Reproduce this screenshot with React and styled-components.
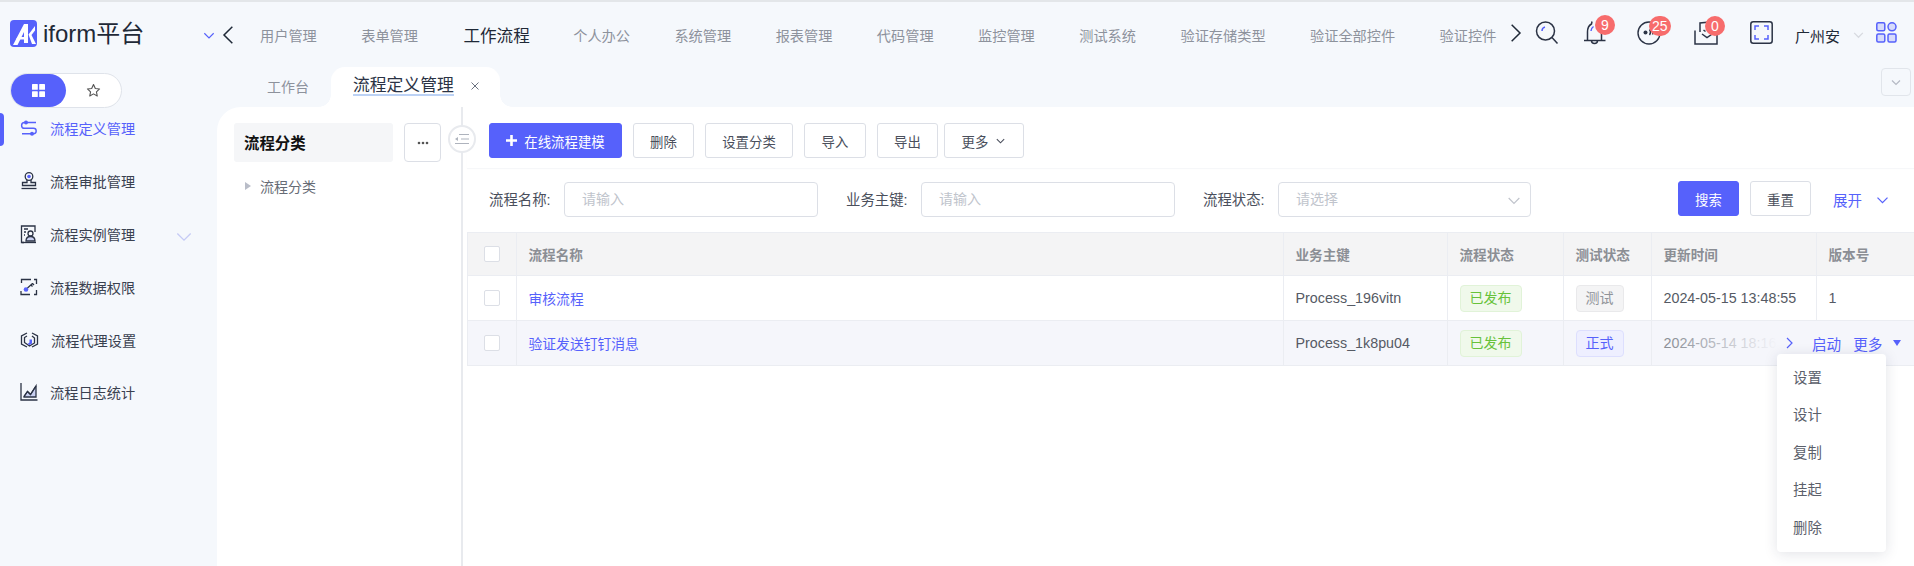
import React from "react";
import styled, { createGlobalStyle } from "styled-components";

const BLUE = "#5661fb";
const INK = "#2b3345";
const FONT = `"Liberation Sans", "Noto Sans CJK SC", sans-serif`;

const Global = createGlobalStyle`
  html, body { margin: 0; padding: 0; background: #f5f8fc; }
  * { box-sizing: border-box; }
  body { font-family: ${FONT}; font-size: 14px; color: #4a4f5c; overflow: hidden; }
`;

const Page = styled.div`
  width: 1914px; height: 566px; overflow: hidden; background: #f5f8fc;
  border-top: 2px solid #e3e6e9; display: flex; flex-direction: column;
`;
const Header = styled.header`
  height: 65px; flex: none; display: flex; align-items: center; padding-left: 10px;
`;
const Logo = styled.div`
  width: 192px; flex: none; display: flex; align-items: center; gap: 6px;
  font-size: 24px; color: #1f2937; line-height: 1; margin-top: -2px;
`;
const SmallChevron = styled.span`
  display: inline-flex; flex: none; color: ${p => p.$color || BLUE};
  margin: ${p => p.$margin || "0"};
`;
const NavArrow = styled.span`
  display: inline-flex; flex: none; margin: ${p => p.$margin || "0"}; color: #1f2937;
`;
const Nav = styled.nav`
  display: flex; align-items: center; gap: 44.45px; width: 1245px; flex: none; overflow: hidden;
`;
const NavItem = styled.span`
  flex: none; white-space: nowrap; font-size: ${p => (p.$active ? "16.6px" : "14.2px")};
  color: ${p => (p.$active ? "#1f2937" : "#8d929c")};
  ${p => (p.$active ? "margin: 0 -1px 0 1px;" : "")}
`;
const HeaderTools = styled.div`
  display: flex; align-items: center; flex: none; margin-top: -4px;
`;
const ToolBox = styled.span`
  position: relative; display: inline-flex; flex: none; margin: 0 ${p => p.$gap}px 0 ${p => p.$before || 0}px;
`;
const Badge = styled.span`
  position: absolute; top: -5px; left: ${p => p.$left}px; height: 20px; min-width: 20px;
  padding: 0 3px; border-radius: 10px; background: #f76c6c; color: #fff; font-size: 14px;
  line-height: 20px; text-align: center;
`;
const UserName = styled.span`
  font-size: 15px; color: #1f2937; margin: 6px 12px 0 0;
`;

const Body = styled.div`
  flex: 1; display: flex; min-height: 0;
`;
const Sidebar = styled.aside`
  width: 217px; flex: none; display: flex; flex-direction: column; padding-top: 6px;
`;
const ModeSwitch = styled.div`
  width: 112px; height: 35px; margin-left: 10px; border: 1px solid #dfe3ea; border-radius: 18px;
  background: #fff; display: flex;
`;
const ModeButton = styled.span`
  width: 55px; height: 33px; border-radius: 17px;
  display: flex; align-items: center; justify-content: center;
  background: ${p => (p.$active ? BLUE : "transparent")};
`;
const Menu = styled.ul`
  list-style: none; margin: 4px 0 0; padding: 0;
`;
const MenuItem = styled.li`
  position: relative; height: 52.8px; display: flex; align-items: center; padding: 0 0 0 20px;
  gap: 12px; font-size: 14.2px; color: ${p => (p.$active ? BLUE : "#3a4150")};
  margin-top: ${p => (p.$first ? "-10px" : "0")};
`;
const ActiveBar = styled.span`
  position: absolute; left: 0; top: 11px; width: 4px; height: 33px; background: ${BLUE};
  border-radius: 0 4px 4px 0;
`;
const MenuChevron = styled.span`
  display: inline-flex; margin-left: 27px; color: #c6cbf5; padding-top: 4px;
`;

const Right = styled.div`
  flex: 1; min-width: 0; display: flex; flex-direction: column;
`;
const TabBar = styled.div`
  height: 40px; flex: none; display: flex; align-items: stretch; position: relative;
`;
const PlainTab = styled.span`
  width: 114px; flex: none; display: flex; align-items: center; justify-content: flex-end;
  padding: 0 22px 3px 0; font-size: 14px; color: #8d929c;
`;
const ActiveTab = styled.div`
  width: 169px; flex: none; background: #fff; border-radius: 14px 14px 0 0; display: flex;
  align-items: center; padding: 0 0 3px 22px; position: relative;
  &::before, &::after {
    content: ""; position: absolute; bottom: 0; width: 12px; height: 12px;
  }
  &::before { left: -12px; background: radial-gradient(circle at 0 0, #f5f8fc 11.5px, #fff 12px); }
  &::after { right: -12px; background: radial-gradient(circle at 100% 0, #f5f8fc 11.5px, #fff 12px); }
`;
const ActiveLabel = styled.span`
  font-size: 16.8px; color: #2b3345; line-height: 20px;
  background: linear-gradient(#bcd2f5, #bcd2f5) left bottom / 100% 2px no-repeat;
`;
const CloseMark = styled.span`
  display: inline-flex; margin-left: 17px; color: #6b7280;
`;
const TabCollapse = styled.span`
  position: absolute; right: 3px; top: 1px; width: 30px; height: 28px; border: 1px solid #e1e5eb;
  border-radius: 4px; display: flex; align-items: center; justify-content: center; color: #b5b9c4;
`;

const Workspace = styled.main`
  flex: 1; min-height: 0; background: #fff; border-top-left-radius: 24px; display: flex;
`;
const TreePanel = styled.section`
  width: 246px; flex: none; border-right: 2px solid #e8eaee; padding: 16px 20px 0 17px; position: relative;
`;
const TreeHead = styled.div`
  display: flex; gap: 11px; height: 39px;
`;
const TreeTitle = styled.div`
  width: 159px; flex: none; background: #f5f6f8; border-radius: 3px; display: flex; align-items: center;
  padding: 0 0 2px 10px; font-size: 15.4px; font-weight: 700; color: #111;
`;
const DotsButton = styled.span`
  width: 37px; flex: none; border: 1px solid #dcdfe6; border-radius: 4px; display: flex; align-items: center;
  justify-content: center; color: #555;
`;
const CollapseCircle = styled.span`
  position: absolute; right: -15px; top: 18px; width: 28px; height: 28px; border-radius: 50%;
  background: #fff; border: 2px solid #e8eaee; display: flex; align-items: center; justify-content: center;
  z-index: 2;
`;
const TreeNode = styled.div`
  display: flex; align-items: center; gap: 9px; padding: 14px 0 0 11px; font-size: 14px; color: #666b75;
`;
const TreeCaret = styled.span`
  width: 0; height: 0; border-left: 6px solid #b9bdc8; border-top: 4.5px solid transparent; border-bottom: 4.5px solid transparent;
`;

const ListPanel = styled.section`
  flex: 1; min-width: 0; padding: 16px 0 0 4px; position: relative;
`;
const Toolbar = styled.div`
  height: 45px; display: flex; align-items: flex-start; padding-left: 22px; gap: 11px;
  box-shadow: 0 1px 1px #f6f7f9;
`;
const Btn = styled.button`
  height: 35px; width: ${p => p.$w}px; flex: none; border-radius: 3px; font-family: ${FONT};
  font-size: 13.4px; padding: 0; cursor: pointer;
  background: ${p => (p.$primary ? BLUE : "#fff")}; color: ${p => (p.$primary ? "#fff" : "#4a4f5c")};
  border: 1px solid ${p => (p.$primary ? BLUE : "#dcdfe6")};
  display: inline-flex; align-items: center; justify-content: center; gap: ${p => p.$gap || 0}px;
  margin: 0 0 ${p => p.$mb || 0}px ${p => p.$ml || 0}px;
`;
const SearchRow = styled.div`
  height: 35px; margin-top: 14px; display: flex; align-items: center; padding-left: 22px;
`;
const FieldLabel = styled.label`
  flex: none; width: ${p => p.$w}px; font-size: 14.4px; color: #4a4f5c; margin-left: ${p => p.$ml || 0}px;
  padding-bottom: 3px; white-space: nowrap;
`;
const Input = styled.div`
  width: ${p => p.$w}px; flex: none; height: 35px; border: 1px solid #dcdfe6; border-radius: 4px;
  display: flex; align-items: center; justify-content: space-between; padding: 0 ${p => p.$pr || 16}px 3px 17px;
  font-size: 14px; color: #c0c4cc;
`;
const LinkToggle = styled.span`
  display: inline-flex; align-items: center; gap: 13px; margin-left: 22px; color: ${BLUE}; font-size: 14.5px;
`;

const Table = styled.table`
  width: 1447px; margin-top: 15px; border-collapse: separate; border-spacing: 0; table-layout: fixed;
  font-size: 14.3px; color: #555a64;
`;
const Th = styled.th`
  height: 44px; background: #f4f4f5; border: 1px solid #ebedf2; border-width: 1px 1px 1px 0;
  padding: 0 11.5px; text-align: left; font-weight: 700; color: #8b8e94; font-size: 13.6px;
  &:first-child { border-left: 1px solid #ebedf2; }
  &:last-child { border-right: 0; }
`;
const Td = styled.td`
  height: 45px; padding: 0 11.5px; border: 1px solid #ebedf2; border-width: 0 1px 1px 0;
  background: ${p => (p.$stripe ? "#f5f6fb" : "#fff")}; white-space: nowrap; overflow: visible;
  &:first-child { border-left: 1px solid #ebedf2; }
  &:last-child { border-right: 0; }
`;
const CheckCell = styled.span`
  display: block; width: 16px; height: 16px; margin-left: 4px; border: 1px solid #dcdfe6; border-radius: 2px; background: #fff;
`;
const LinkText = styled.a`
  color: ${BLUE}; font-size: 13.8px;
`;
const Tag = styled.span`
  display: inline-flex; height: 27px; align-items: center; padding: 0 9px 2px; border-radius: 4px; font-size: 14px;
  color: ${p => p.$color}; background: ${p => p.$bg}; border: 1px solid ${p => p.$border};
`;
const FadeCell = styled(Td)`
  position: relative;
`;
const DateFade = styled.span`
  color: #8b8f97;
`;
const RowActions = styled.div`
  position: absolute; top: 0; bottom: 0; right: -97px; width: 245px; display: flex; align-items: center;
  padding-left: 115px; z-index: 1;
  background: linear-gradient(90deg, rgba(245,246,251,0) 0, #f5f6fb 45%);
  color: ${BLUE}; font-size: 14.6px;
`;
const ActionText = styled.span`
  margin-left: ${p => p.$ml}px;
`;
const DownTri = styled.span`
  width: 0; height: 0; margin-left: 11px; border-top: 6px solid ${BLUE}; border-left: 4.5px solid transparent; border-right: 4.5px solid transparent;
`;
const Dropdown = styled.ul`
  position: absolute; top: 247px; right: 28px; width: 109px; height: 198px; margin: 0; padding: 6px 0 0 16px;
  list-style: none; background: #fff; border-radius: 4px; box-shadow: 0 2px 14px rgba(30,40,70,.13); z-index: 5;
`;
const DropItem = styled.li`
  height: 37.4px; line-height: 37.4px; font-size: 14.4px; color: #5b606b;
`;

const Chev = ({ s = 12, d = "down", w = 1.2 }) => {
  const p = { down: "M2 4.5l4 4 4-4", left: "M8 1L3 6l5 5", right: "M4 1l5 5-5 5" }[d];
  return <svg width={s} height={s} viewBox="0 0 12 12" fill="none" stroke="currentColor" strokeWidth={w}><path d={p} /></svg>;
};

const LogoMark = () => (
  <svg width="27" height="27" viewBox="0 0 27 27">
    <rect width="27" height="27" rx="4" fill={BLUE} />
    <path d="M3 25L14 4h4v19h-4V12L7.5 25z" fill="#fff" />
    <path d="M6 19.500h8v-2.500H7.500z" fill="#fff" />
    <path d="M18.500 14.500L25 6v4.500L21.500 15l4.500 9h-4z" fill="#fff" />
  </svg>
);

const SearchIcon = () => (
  <svg width="24" height="24" viewBox="0 0 24 24" fill="none" strokeWidth="1.5">
    <circle cx="10.5" cy="10" r="9" stroke={INK} />
    <path d="M17 16.500l5.500 6" stroke={INK} />
    <path d="M7 10c0-2 1-3.500 3-4" stroke={BLUE} />
  </svg>
);
const BellIcon = () => (
  <svg width="24" height="26" viewBox="0 0 24 26" fill="none" strokeWidth="1.5">
    <path d="M1 20.500h21.500" stroke={INK} />
    <path d="M4.500 20.500V12c0-4 2-7 4-8l.5-2.500M18.500 20.500V12" stroke={INK} />
    <path d="M8.500 20.500c0 2 1.200 3 3 3s3-1 3-3" stroke={INK} />
    <path d="M8 11c0-2 1-3.500 2.500-4.500" stroke={BLUE} />
  </svg>
);
const DiscIcon = () => (
  <svg width="24" height="24" viewBox="0 0 24 24" fill="none" strokeWidth="1.4">
    <circle cx="12" cy="12" r="11" stroke={INK} />
    <circle cx="8.5" cy="11.5" r="2" fill={INK} />
    <path d="M12.500 8.500c1.200 1.500 1.200 4 0 5.500M15.500 13.500c.5-1 .5-2.500.2-3.500" stroke={INK} />
  </svg>
);
const MailIcon = () => (
  <svg width="24" height="24" viewBox="0 0 24 24" fill="none" strokeWidth="1.5">
    <path d="M6 11V2l10-1M1 9.500V23h22V10" stroke={INK} />
    <path d="M8 13l5 3.500 6-4" stroke={INK} />
    <path d="M9.500 9l2 1.500" stroke={INK} />
  </svg>
);
const FullscreenIcon = () => (
  <svg width="23" height="23" viewBox="0 0 23 23" fill="none" strokeWidth="1.5">
    <rect x=".8" y=".8" width="21.4" height="21.4" rx="2.5" stroke={INK} />
    <path d="M5 9V5h4M14 5h4v4M18 14v4h-4M9 18H5v-4" stroke={BLUE} />
  </svg>
);
const GridIcon = () => (
  <svg width="21" height="21" viewBox="0 0 21 21" fill="none" stroke={BLUE} strokeWidth="1.5">
    <rect x=".8" y=".8" width="8" height="8" rx="1.5" fill="#d7dbfb" />
    <circle cx="16" cy="4.8" r="4" fill="#d7dbfb" />
    <rect x=".8" y="12" width="8" height="8" rx="1.5" fill="#d7dbfb" />
    <rect x="12" y="12" width="8" height="8" rx="1.5" fill="#d7dbfb" />
  </svg>
);
const StarIcon = () => (
  <svg width="15" height="15" viewBox="0 0 24 24" fill="none" stroke="#555" strokeWidth="1.8" strokeLinejoin="round">
    <path d="M12 2.500l2.900 6.200 6.800.8-5 4.600 1.300 6.700-6-3.400-6 3.400 1.300-6.700-5-4.600 6.800-.8z" />
  </svg>
);
const SquaresIcon = () => (
  <svg width="13" height="13" viewBox="0 0 13 13" fill="#fff">
    <rect width="5.8" height="5.8" rx=".6" /><rect x="7.2" width="5.8" height="5.8" rx=".6" />
    <rect y="7.2" width="5.8" height="5.8" rx=".6" /><rect x="7.2" y="7.2" width="5.8" height="5.8" rx=".6" />
  </svg>
);

const FlowIcon = () => (
  <svg width="18" height="18" viewBox="0 0 18 18" fill="none" stroke={BLUE} strokeWidth="1.4">
    <path d="M16 3.500H4.500a2.900 2.900 0 0 0 0 5.800h9a2.700 2.700 0 0 1 0 5.400H2" />
    <circle cx="6" cy="3.500" r="2" fill={BLUE} stroke="none" />
    <circle cx="12" cy="14.700" r="2" fill={BLUE} stroke="none" />
  </svg>
);
const StampIcon = () => (
  <svg width="18" height="18" viewBox="0 0 18 18" fill="none" stroke={INK} strokeWidth="1.3">
    <circle cx="9" cy="4.5" r="3.8" />
    <circle cx="9" cy="4.5" r="1.8" fill={BLUE} stroke="none" />
    <path d="M7 8v2.500H2.500v3h13v-3H11V8" />
    <path d="M1.500 16.500h15" />
  </svg>
);
const InstanceIcon = () => (
  <svg width="18" height="20" viewBox="0 0 18 20" fill="none" stroke={INK} strokeWidth="1.3">
    <path d="M4 18.500H1.500V2h13.500v6" />
    <path d="M4 5h4M4 8h2M4 11h1" />
    <circle cx="10.5" cy="9.5" r="2.5" />
    <path d="M6 17c0-3 2-4.500 4.500-4.500S15 14 15 17z" fill="#c9d0f0" />
    <path d="M2 18.500h14" />
  </svg>
);
const KeyIcon = () => (
  <svg width="18" height="18" viewBox="0 0 18 18" fill="none" stroke={INK} strokeWidth="1.3">
    <path d="M11 1.500H1.500V5M1 13v3.500h9M16.500 12v4.500H14M16.500 6V1.500H14" />
    <circle cx="6" cy="11.5" r="2.3" fill={BLUE} stroke="none" />
    <path d="M7.500 10l5-4.500M11 7l1.500 1.500M12.500 5.500L14 7" />
  </svg>
);
const HexIcon = () => (
  <svg width="19" height="18" viewBox="0 0 19 18" fill="none" stroke={INK} strokeWidth="1.3">
    <path d="M7 2L1.500 5v8L7 16M12 2l5.500 3v8L12 16" />
    <path d="M7 5l-2.500 1.500v5L9.500 15l5-3v-5L12 5" />
    <path d="M9.500 8.500v3l-2 1.500 2 1 2.500-1.500V8.500z" fill={BLUE} stroke="none" />
  </svg>
);
const ChartIcon = () => (
  <svg width="18" height="18" viewBox="0 0 18 18" fill="none" stroke={INK} strokeWidth="1.3">
    <path d="M1 0v17h16.500" />
    <path d="M4 13.500l3.500-5 3 3L16 3v11H4z" fill="#c9d0f0" />
    <path d="M4 13.500l3.500-5 3 3L16 3" />
  </svg>
);

const navItems = ["用户管理", "表单管理", "工作流程", "个人办公", "系统管理", "报表管理", "代码管理", "监控管理", "测试系统", "验证存储类型", "验证全部控件", "验证控件"];
const menu = [
  ["流程定义管理", <FlowIcon />],
  ["流程审批管理", <StampIcon />],
  ["流程实例管理", <InstanceIcon />],
  ["流程数据权限", <KeyIcon />],
  ["流程代理设置", <HexIcon />],
  ["流程日志统计", <ChartIcon />],
];

export default function App() {
  return (
    <Page>
      <Global />
      <Header>
        <Logo><LogoMark />iform平台</Logo>
        <SmallChevron><Chev s={14} w={1} /></SmallChevron>
        <NavArrow $margin="0 21px 0 3px"><Chev s={20} d="left" w={0.9} /></NavArrow>
        <Nav>
          {navItems.map(n => <NavItem key={n} $active={n === "工作流程"}>{n}</NavItem>)}
        </Nav>
        <HeaderTools>
          <NavArrow><Chev s={20} d="right" w={0.9} /></NavArrow>
          <ToolBox $before={10} $gap={24}><SearchIcon /></ToolBox>
          <ToolBox $gap={30}><BellIcon /><Badge $left={12}>9</Badge></ToolBox>
          <ToolBox $gap={33}><DiscIcon /><Badge $left={12}>25</Badge></ToolBox>
          <ToolBox $gap={32}><MailIcon /><Badge $left={11}>0</Badge></ToolBox>
          <ToolBox $gap={22}><FullscreenIcon /></ToolBox>
          <UserName>广州安</UserName>
          <SmallChevron $color="#d7dae0" $margin="4px 11px 0 0"><Chev s={13} /></SmallChevron>
          <ToolBox $gap={0}><GridIcon /></ToolBox>
        </HeaderTools>
      </Header>
      <Body>
        <Sidebar>
          <ModeSwitch>
            <ModeButton $active><SquaresIcon /></ModeButton>
            <ModeButton><StarIcon /></ModeButton>
          </ModeSwitch>
          <Menu>
            {menu.map(([t, icon], i) => (
              <MenuItem key={t} $active={i === 0} $first={i === 0}>
                {i === 0 && <ActiveBar />}
                {icon}{t}
                {i === 2 && <MenuChevron><Chev s={20} w={0.8} /></MenuChevron>}
              </MenuItem>
            ))}
          </Menu>
        </Sidebar>
        <Right>
          <TabBar>
            <PlainTab>工作台</PlainTab>
            <ActiveTab>
              <ActiveLabel>流程定义管理</ActiveLabel>
              <CloseMark>
                <svg width="8" height="8" viewBox="0 0 8 8" stroke="currentColor" fill="none" strokeWidth="1"><path d="M.5.5l7 7M7.500.5l-7 7" /></svg>
              </CloseMark>
            </ActiveTab>
            <TabCollapse><Chev s={12} /></TabCollapse>
          </TabBar>
          <Workspace>
            <TreePanel>
              <TreeHead>
                <TreeTitle>流程分类</TreeTitle>
                <DotsButton>
                  <svg width="12" height="4" viewBox="0 0 12 4" fill="currentColor"><circle cx="2" cy="2" r="1.3" /><circle cx="6" cy="2" r="1.3" /><circle cx="10" cy="2" r="1.3" /></svg>
                </DotsButton>
              </TreeHead>
              <CollapseCircle>
                <svg width="16" height="12" viewBox="0 0 16 12" fill="none" stroke="#aeb3bd" strokeWidth="1.1">
                  <path d="M5 1.500h10M7 6h8M1 10.500h14" /><path d="M4 4v4L1 6z" fill="#aeb3bd" stroke="none" />
                </svg>
              </CollapseCircle>
              <TreeNode><TreeCaret />流程分类</TreeNode>
            </TreePanel>
            <ListPanel>
              <Toolbar>
                <Btn $primary $w={133} $gap={7}>
                  <svg width="11" height="11" viewBox="0 0 11 11" fill="#fff"><path d="M4.200 0h2.600v4.200H11v2.600H6.800V11H4.200V6.800H0V4.200h4.200z" /></svg>
                  在线流程建模
                </Btn>
                <Btn $w={61}>删除</Btn>
                <Btn $w={88}>设置分类</Btn>
                <Btn $w={62}>导入</Btn>
                <Btn $w={61}>导出</Btn>
                <Btn $w={80} $ml={-5} $gap={7}>更多<Chev s={11} /></Btn>
              </Toolbar>
              <SearchRow>
                <FieldLabel $w={75}>流程名称:</FieldLabel>
                <Input $w={254}>请输入</Input>
                <FieldLabel $w={75} $ml={28}>业务主键:</FieldLabel>
                <Input $w={254}>请输入</Input>
                <FieldLabel $w={75} $ml={28}>流程状态:</FieldLabel>
                <Input $w={253} $pr={8}>请选择<SmallChevron $color="#c0c4cc" $margin="3px 0 0"><Chev s={16} w={0.9} /></SmallChevron></Input>
                <Btn $primary $w={61} $ml={147} $mb={2}>搜索</Btn>
                <Btn $w={61} $ml={11} $mb={2}>重置</Btn>
                <LinkToggle>展开<Chev s={15} w={1} /></LinkToggle>
              </SearchRow>
              <Table>
                <colgroup>
                  <col width="50" /><col width="767" /><col width="164" /><col width="116" /><col width="88" /><col width="165" /><col width="97" />
                </colgroup>
                <thead>
                  <tr>
                    <Th><CheckCell /></Th><Th>流程名称</Th><Th>业务主键</Th><Th>流程状态</Th><Th>测试状态</Th><Th>更新时间</Th><Th>版本号</Th>
                  </tr>
                </thead>
                <tbody>
                  <tr>
                    <Td><CheckCell /></Td>
                    <Td><LinkText>审核流程</LinkText></Td>
                    <Td>Process_196vitn</Td>
                    <Td><Tag $color="#67c23a" $bg="#f0f9eb" $border="#e1f3d8">已发布</Tag></Td>
                    <Td><Tag $color="#909399" $bg="#f4f4f5" $border="#e9e9eb">测试</Tag></Td>
                    <Td>2024-05-15 13:48:55</Td>
                    <Td>1</Td>
                  </tr>
                  <tr>
                    <Td $stripe><CheckCell /></Td>
                    <Td $stripe><LinkText>验证发送钉钉消息</LinkText></Td>
                    <Td $stripe>Process_1k8pu04</Td>
                    <Td $stripe><Tag $color="#67c23a" $bg="#f0f9eb" $border="#e1f3d8">已发布</Tag></Td>
                    <Td $stripe><Tag $color={BLUE} $bg="#eeefff" $border="#dddffe">正式</Tag></Td>
                    <FadeCell $stripe>
                      <DateFade>2024-05-14 18:16:20</DateFade>
                      <RowActions>
                        <Chev s={12} d="right" />
                        <ActionText $ml={17}>启动</ActionText>
                        <ActionText $ml={12}>更多</ActionText>
                        <DownTri />
                      </RowActions>
                    </FadeCell>
                    <Td $stripe></Td>
                  </tr>
                </tbody>
              </Table>
              <Dropdown>
                {["设置", "设计", "复制", "挂起", "删除"].map(x => <DropItem key={x}>{x}</DropItem>)}
              </Dropdown>
            </ListPanel>
          </Workspace>
        </Right>
      </Body>
    </Page>
  );
}
